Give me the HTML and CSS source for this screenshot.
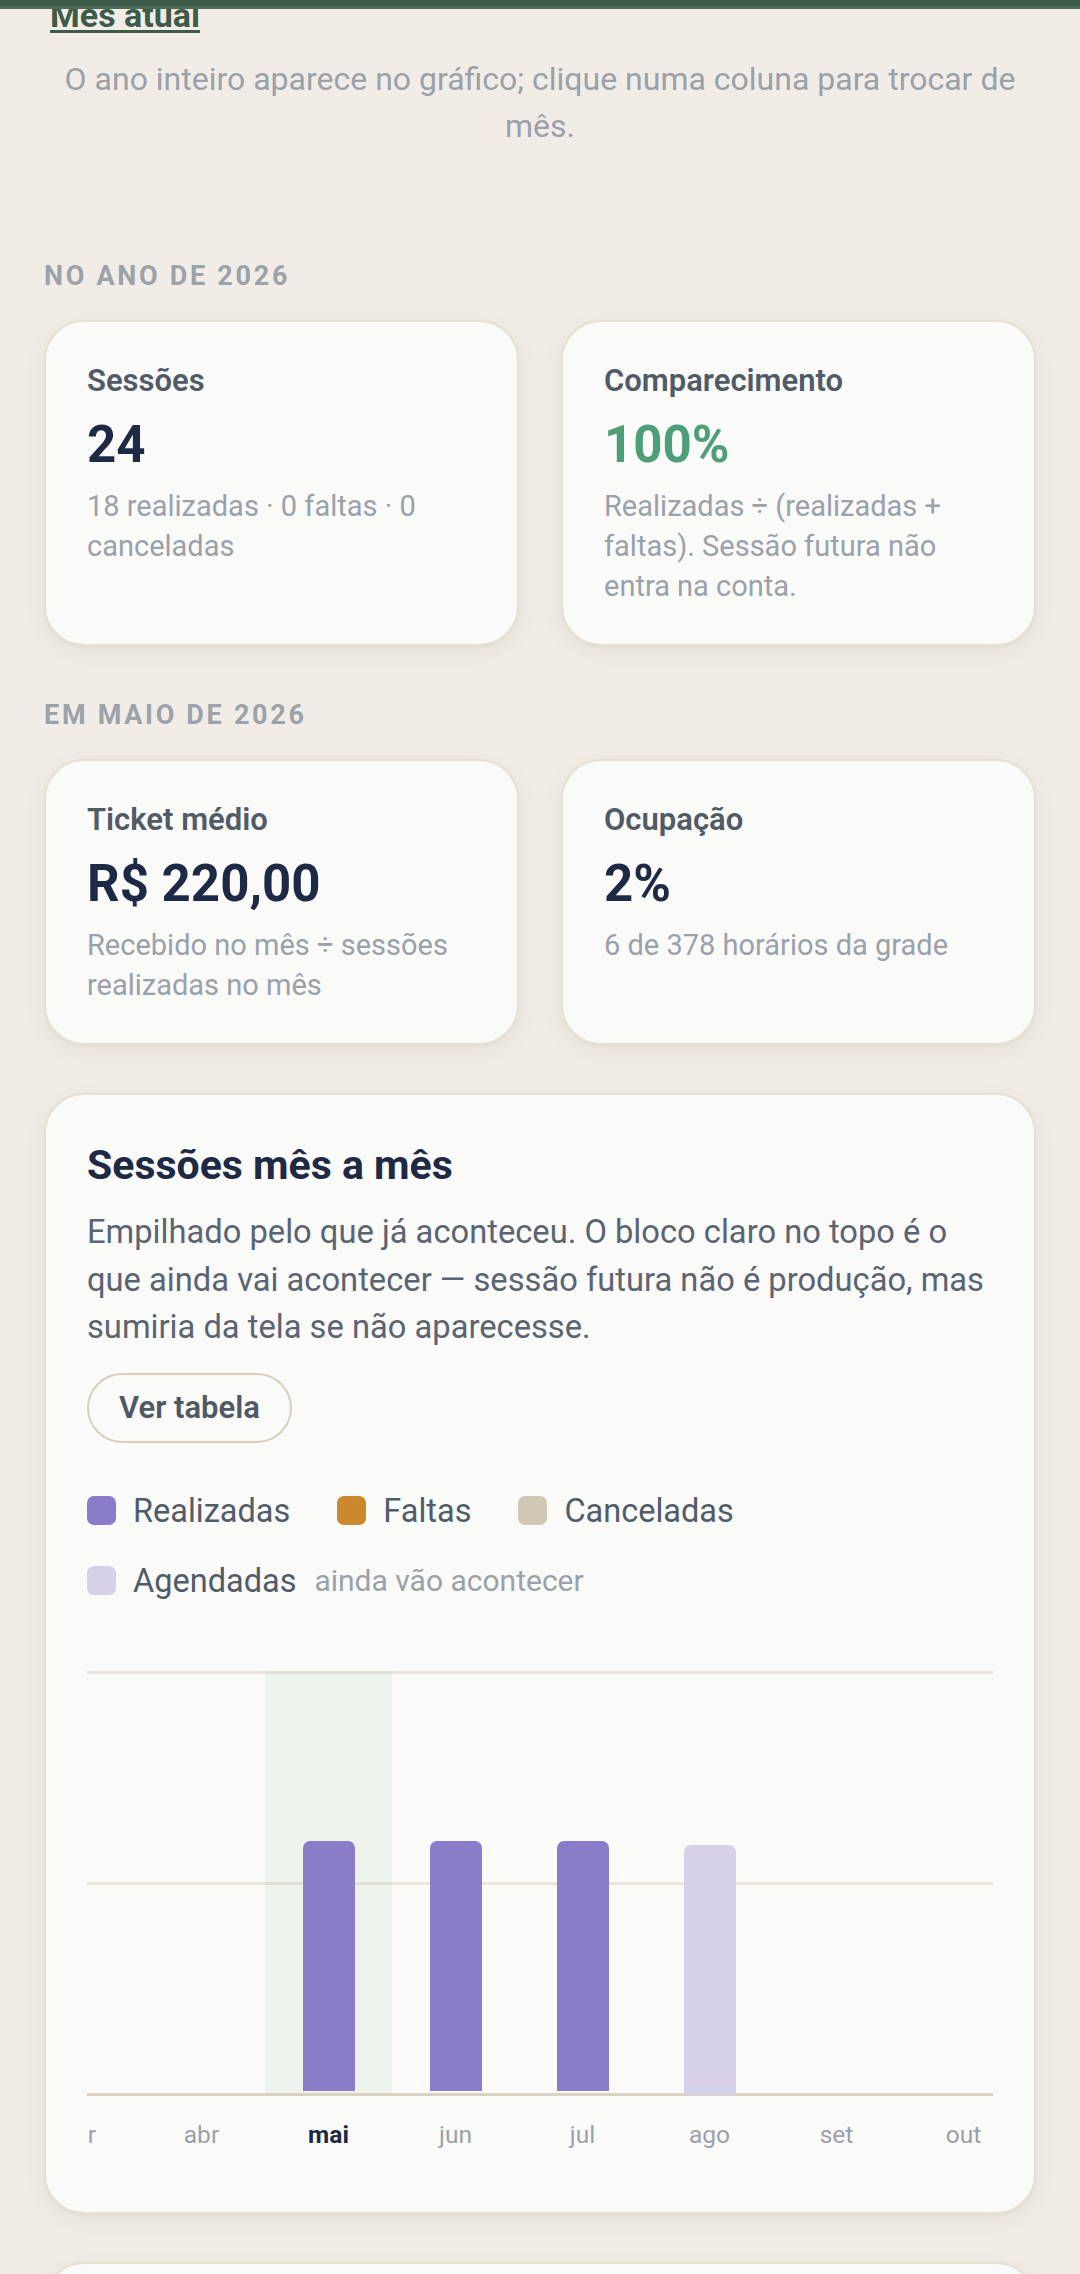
FILE: index.html
```html
<!DOCTYPE html>
<html lang="pt-BR">
  <head>
    <meta charset="UTF-8" />
    <meta name="viewport" content="width=device-width, initial-scale=1.0" />
    <link rel="stylesheet" href="styles.css">
    <title>Relatórios</title>
  </head>
  <body>
    <header class="topbar"></header>
    <main class="page">
      <a class="month-link" href="#">Mês atual</a>
      <p class="intro">
        O ano inteiro aparece no gráfico; clique numa coluna para trocar de mês.
      </p>

      <h2 class="section-label">No ano de 2026</h2>
      <div class="stats">
        <div class="card stat">
          <div class="stat-label">Sessões</div>
          <div class="stat-value">24</div>
          <div class="stat-note">18 realizadas · 0 faltas · 0 canceladas</div>
        </div>
        <div class="card stat">
          <div class="stat-label">Comparecimento</div>
          <div class="stat-value good">100%</div>
          <div class="stat-note">
            Realizadas ÷ (realizadas + faltas). Sessão futura não entra na conta.
          </div>
        </div>
      </div>

      <h2 class="section-label">Em maio de 2026</h2>
      <div class="stats">
        <div class="card stat">
          <div class="stat-label">Ticket médio</div>
          <div class="stat-value">R$ 220,00</div>
          <div class="stat-note">Recebido no mês ÷ sessões realizadas no mês</div>
        </div>
        <div class="card stat">
          <div class="stat-label">Ocupação</div>
          <div class="stat-value">2%</div>
          <div class="stat-note">6 de 378 horários da grade</div>
        </div>
      </div>

      <section class="card chart-card">
        <h3 class="chart-title">Sessões mês a mês</h3>
        <p class="chart-desc">
          Empilhado pelo que já aconteceu. O bloco claro no topo é o que ainda
          vai acontecer — sessão futura não é produção, mas sumiria da tela se
          não aparecesse.
        </p>
        <button class="pill-btn" type="button">Ver tabela</button>

        <ul class="legend">
          <li><span class="swatch done"></span>Realizadas</li>
          <li><span class="swatch missed"></span>Faltas</li>
          <li><span class="swatch cancelled"></span>Canceladas</li>
          <li>
            <span class="swatch scheduled"></span>Agendadas
            <span class="legend-hint">ainda vão acontecer</span>
          </li>
        </ul>

        <div class="chart">
          <div class="chart-track">
            <div class="month"><div class="month-plot"></div><span class="month-name">jan</span></div>
            <div class="month"><div class="month-plot"></div><span class="month-name">fev</span></div>
            <div class="month"><div class="month-plot"></div><span class="month-name">mar</span></div>
            <div class="month"><div class="month-plot"></div><span class="month-name">abr</span></div>
            <div class="month current">
              <div class="month-plot"><div class="bar done" style="height: 250px"></div></div>
              <span class="month-name">mai</span>
            </div>
            <div class="month">
              <div class="month-plot"><div class="bar done" style="height: 250px"></div></div>
              <span class="month-name">jun</span>
            </div>
            <div class="month">
              <div class="month-plot"><div class="bar done" style="height: 250px"></div></div>
              <span class="month-name">jul</span>
            </div>
            <div class="month">
              <div class="month-plot"><div class="bar scheduled" style="height: 250px"></div></div>
              <span class="month-name">ago</span>
            </div>
            <div class="month"><div class="month-plot"></div><span class="month-name">set</span></div>
            <div class="month"><div class="month-plot"></div><span class="month-name">out</span></div>
            <div class="month"><div class="month-plot"></div><span class="month-name">nov</span></div>
            <div class="month"><div class="month-plot"></div><span class="month-name">dez</span></div>
          </div>
        </div>
      </section>

      <section class="card next-card"></section>
    </main>
  </body>
</html>
```

FILE: styles.css
```css
* {
  margin: 0;
  padding: 0;
  box-sizing: border-box;
}

body {
  background-color: #f1ede6;
  font-family: Roboto, "Noto Sans", "Liberation Sans", sans-serif;
  color: #1e2a45;
  overflow: hidden;
}

.topbar {
  position: fixed;
  top: 0;
  left: 0;
  right: 0;
  height: 9px;
  background-color: #3e5b49;
  border-bottom: 3px solid #4b6a56;
  z-index: 10;
}

.page {
  padding: 0 44px;
}

.month-link {
  display: inline-block;
  margin-left: 6px;
  font-size: 34px;
  line-height: 30px;
  font-weight: 700;
  color: #3e5b49;
  text-decoration: underline;
  text-decoration-thickness: 3px;
  text-underline-offset: 3px;
}

.intro {
  margin-top: 25px;
  font-size: 32px;
  line-height: 47px;
  color: #9aa1aa;
  text-align: center;
}

.section-label {
  margin-top: 53px;
  font-size: 27px;
  line-height: 32px;
  font-weight: 700;
  letter-spacing: 0.1em;
  text-transform: uppercase;
  color: #9ba2aa;
}

.intro + .section-label {
  margin-top: 110px;
}

.stats {
  display: grid;
  grid-template-columns: 1fr 1fr;
  gap: 42px;
  margin-top: 28px;
}

.card {
  background-color: #fafaf8;
  border: 2px solid #e6e1d2;
  border-radius: 40px;
  box-shadow: 0 6px 22px rgba(90, 75, 40, 0.08), 0 1px 3px rgba(90, 75, 40, 0.05);
}

.stat {
  padding: 40px 41px 38px;
}

.stat-label {
  font-size: 31px;
  line-height: 38px;
  font-weight: 600;
  color: #515b68;
}

.stat-value {
  margin-top: 15px;
  font-size: 51px;
  line-height: 60px;
  font-weight: 700;
  color: #1e2a45;
}

.stat-value.good {
  color: #4e9e78;
}

.stat-note {
  margin-top: 11px;
  font-size: 29px;
  line-height: 40px;
  color: #9aa1ab;
}

.chart-card {
  margin-top: 48px;
  padding: 45px 41px 42px;
}

.chart-title {
  font-size: 41px;
  line-height: 50px;
  font-weight: 700;
  color: #1e2a45;
}

.chart-desc {
  margin-top: 19px;
  font-size: 32.7px;
  line-height: 47.5px;
  color: #5a6472;
}

.pill-btn {
  display: block;
  margin-top: 21px;
  height: 70px;
  padding: 0 30px;
  font-family: inherit;
  font-size: 31px;
  font-weight: 600;
  color: #4f5966;
  background: transparent;
  border: 2px solid #d8d0bf;
  border-radius: 999px;
}

.legend {
  list-style: none;
  display: flex;
  flex-wrap: wrap;
  column-gap: 47px;
  row-gap: 30px;
  margin-top: 48px;
}

.legend li {
  display: flex;
  align-items: center;
  gap: 17px;
  font-size: 32.5px;
  line-height: 40px;
  color: #525c69;
}

.swatch {
  width: 29px;
  height: 29px;
  border-radius: 7px;
}

.swatch.done,
.bar.done {
  background-color: #8b7cc9;
}

.swatch.missed {
  background-color: #c9892c;
}

.swatch.cancelled {
  background-color: #d0c8b5;
}

.swatch.scheduled,
.bar.scheduled {
  background-color: #d6d1e8;
}

.legend-hint {
  margin-left: 1px;
  font-size: 30px;
  color: #9aa1ab;
}

.chart {
  margin-top: 70px;
  overflow: hidden;
  background-image:
    linear-gradient(#ebe6da, #ebe6da),
    linear-gradient(#ebe6da, #ebe6da),
    linear-gradient(#dad2c1, #dad2c1);
  background-repeat: no-repeat;
  background-size: 100% 3px, 100% 3px, 100% 3px;
  background-position: 0 0, 0 211px, 0 422px;
}

.chart-track {
  display: flex;
  width: 1524px;
  margin-left: -330px;
  padding-bottom: 20px;
}

.month {
  display: flex;
  flex-direction: column;
  align-items: center;
  width: 127px;
}

.month-plot {
  display: flex;
  align-items: flex-end;
  justify-content: center;
  width: 100%;
  height: 422px;
}

.month.current .month-plot {
  background-color: rgba(70, 130, 90, 0.06);
}

.bar {
  width: 52px;
  border-radius: 7px 7px 0 0;
}

.bar.done {
  margin-bottom: 2px;
}

.bar.scheduled {
  margin-bottom: -2px;
}

.month-name {
  margin-top: 27px;
  font-size: 24.5px;
  line-height: 30px;
  color: #9aa1ab;
}

.month.current .month-name {
  font-weight: 700;
  color: #1e2a45;
}

.next-card {
  margin-top: 48px;
  height: 300px;
}
```
